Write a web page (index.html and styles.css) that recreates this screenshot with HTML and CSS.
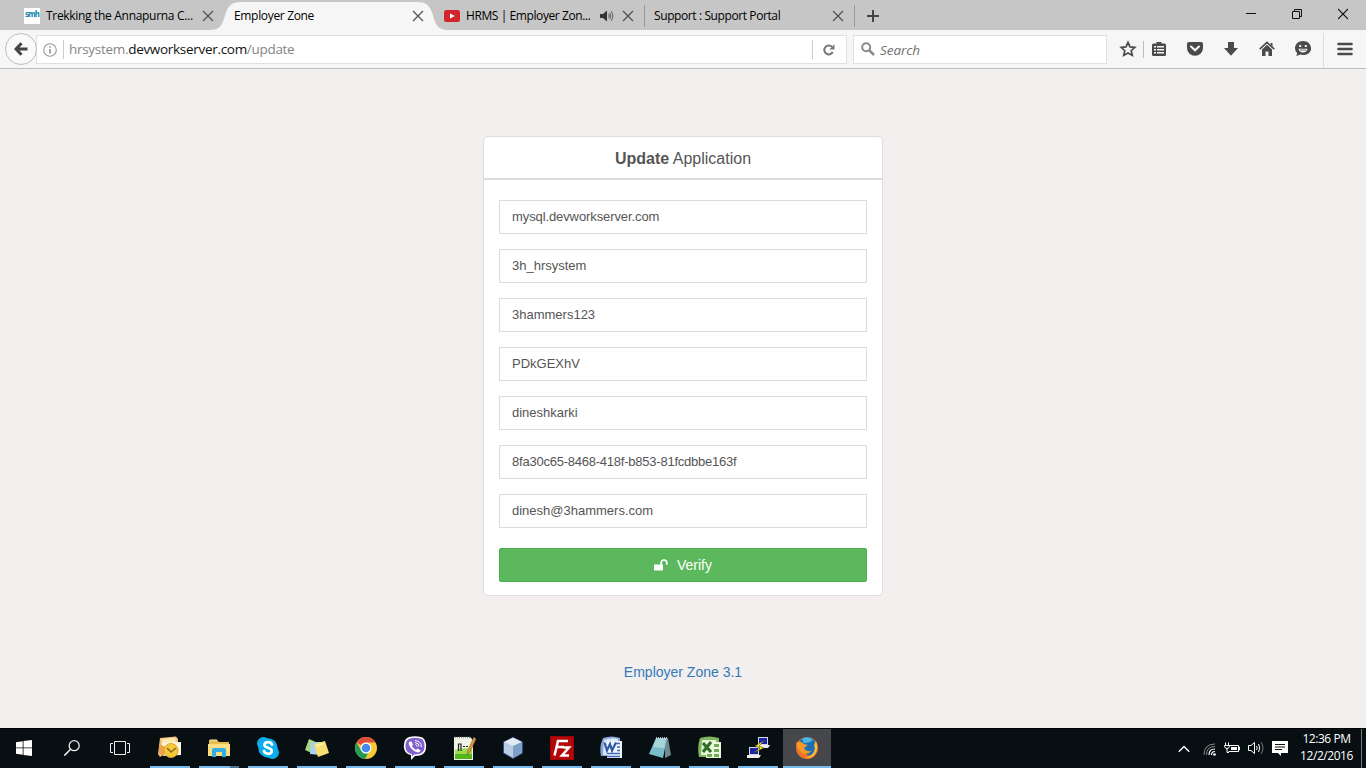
FILE: index.html
```html
<!DOCTYPE html>
<html lang="en">
<head>
<meta charset="utf-8">
<title>Employer Zone</title>
<link rel="stylesheet" href="styles.css">
</head>
<body>
<div class="screen">
  <header class="tabstrip">
    <div class="tab">
      <span class="favicon-smh">smh</span>
      <span class="tab-title t1">Trekking the Annapurna C...</span>
      <svg class="close" viewBox="0 0 12 12"><path d="M1 1L11 11M11 1L1 11"/></svg>
    </div>
    <div class="tab active">
      <svg class="tab-shape" viewBox="0 0 238 28"><path d="M0 28C9 28 12 24 14.500 15C17.500 4 21 0 31 0H207C217 0 220.500 4 223.500 15C226 24 229 28 238 28Z" fill="#f6f6f6"/></svg>
      <span class="tab-title t2">Employer Zone</span>
      <svg class="close" viewBox="0 0 12 12"><path d="M1 1L11 11M11 1L1 11"/></svg>
    </div>
    <div class="tab">
      <svg class="yt" viewBox="0 0 16 12"><rect width="16" height="12" rx="2.500" fill="#d3232b"/><path d="M6 3.500V8.500L11 6Z" fill="#fff"/></svg>
      <span class="tab-title t3">HRMS | Employer Zon...</span>
      <svg class="sound" viewBox="0 0 14 12"><path d="M0 4H3L7 .5V11.500L3 8H0Z" fill="#333"/><path d="M8.500 4Q10 6 8.500 8M9.800 2.500Q12 6 9.800 9.500M11.200 1.200Q14.500 6 11.200 10.800" fill="none" stroke="#555" stroke-width=".9"/></svg>
      <svg class="close" viewBox="0 0 12 12"><path d="M1 1L11 11M11 1L1 11"/></svg>
    </div>
    <div class="tab ruled">
      <span class="tab-title t4">Support : Support Portal</span>
      <svg class="close" viewBox="0 0 12 12"><path d="M1 1L11 11M11 1L1 11"/></svg>
    </div>
    <div class="newtab"><svg width="12" height="12" viewBox="0 0 12 12"><path d="M6 0V12M0 6H12" stroke="#444" stroke-width="2"/></svg></div>
    <div class="winbtns">
      <svg width="10" height="12" viewBox="0 0 10 12"><path d="M0 5.500H10" stroke="#111"/></svg>
      <svg width="10" height="12" viewBox="0 0 10 12"><path d="M.5 3.500H7.500V10.500H.5ZM2.500 3.500V1.500H9.500V8.500H7.500" fill="none" stroke="#111"/></svg>
      <svg width="10" height="12" viewBox="0 0 10 12"><path d="M0 1L10 11M10 1L0 11" stroke="#111" stroke-width="1.100"/></svg>
    </div>
  </header>
  <nav class="toolbar">
    <div class="back"><svg width="14" height="14" viewBox="0 0 14 14"><path d="M7.500 1.200L2 7L7.500 12.800M2.500 7H13.500" fill="none" stroke="#444" stroke-width="3"/></svg></div>
    <div class="urlbox">
      <svg class="info" width="14" height="14" viewBox="0 0 14 14"><circle cx="7" cy="7" r="6.300" fill="none" stroke="#969696" stroke-width="1.100"/><path d="M7 6V10.500M7 3.200V4.800" stroke="#888" stroke-width="1.500"/></svg>
      <span class="url">hrsystem.<b>devworkserver.com</b>/update</span>
      <span class="reload"><svg width="12" height="12" viewBox="0 0 12 12"><path d="M9.800 8A4.500 4.500 0 1 1 9 2.700" fill="none" stroke="#777" stroke-width="2"/><path d="M11.500 .3V5.500H6.300Z" fill="#777"/></svg></span>
    </div>
    <div class="searchbox">
      <svg width="14" height="14" viewBox="0 0 14 14"><circle cx="5.200" cy="5.200" r="4" fill="none" stroke="#8a8a8a" stroke-width="2"/><path d="M8 8L13 13" stroke="#8a8a8a" stroke-width="2.500"/></svg>
      <span class="placeholder">Search</span>
    </div>
    <div class="tools">
      <svg width="18" height="18" viewBox="0 0 18 18"><path d="M9 2.300L11 6.900L15.800 7.400L12.200 10.700L13.300 15.400L9 13L4.700 15.400L5.800 10.700L2.200 7.400L7 6.900Z" fill="none" stroke="#4a4a4a" stroke-width="1.700"/></svg>
      <i class="minirule"></i>
      <svg width="18" height="18" viewBox="0 0 18 18"><path d="M3.500 3.500H6.500V2H11.500V3.500H14.500Q16 3.500 16 5V14.500Q16 16 14.500 16H3.500Q2 16 2 14.500V5Q2 3.500 3.500 3.500Z" fill="#4a4a4a"/><path d="M4 6H6V7.500H4ZM7 6H14V7.500H7ZM4 9H6V10.500H4ZM7 9H14V10.500H7ZM4 12H6V13.500H4ZM7 12H14V13.500H7Z" fill="#f6f6f6"/></svg>
      <svg width="18" height="18" viewBox="0 0 18 18"><path d="M3 2H15Q17 2 17 4V8A8 7.700 0 0 1 1 8V4Q1 2 3 2Z" fill="#4a4a4a"/><path d="M5 6.500L9 10.300L13 6.500" stroke="#f6f6f6" stroke-width="2" fill="none" stroke-linecap="round"/></svg>
      <svg width="18" height="18" viewBox="0 0 18 18"><path d="M6 2H12V8H16L9 15.800L2 8H6Z" fill="#4a4a4a"/></svg>
      <svg width="18" height="18" viewBox="0 0 18 18"><path d="M1.700 9.200L9 2.300L16.300 9.200" fill="none" stroke="#4a4a4a" stroke-width="1.600"/><path d="M4 9.500L9 4.800L14 9.500V16H10.500V11.500H7.500V16H4ZM12.500 3H14.500V6.500L12.500 4.500Z" fill="#4a4a4a"/></svg>
      <svg width="18" height="18" viewBox="0 0 18 18"><path d="M9 1C13.700 1 17 4.200 17 8.200S13.700 15 9 15Q7.500 15 6.200 14.600Q4.500 15.800 2 15.700Q3.200 14.500 3.100 13Q1 11.200 1 8.200C1 4.200 4.300 1 9 1Z" fill="#4a4a4a"/><path d="M6.200 5V7M11.800 5V7" stroke="#f6f6f6" stroke-width="2"/><path d="M4.500 8.800H13.500Q12.800 12.500 9 12.500T4.500 8.800Z" fill="#f6f6f6"/><path d="M6 10H12" stroke="#777"/></svg>
    </div>
    <div class="menu"><svg width="16" height="14" viewBox="0 0 16 14"><path d="M1.500 2H14.500M1.500 7H14.500M1.500 12H14.500" stroke="#4a4a4a" stroke-width="2.600" stroke-linecap="round"/></svg></div>
  </nav>
  <main class="page">
    <section class="panel">
      <h1 class="panel-title"><b>Update</b> Application</h1>
      <form class="form">
        <div class="field host">mysql.devworkserver.com</div>
        <div class="field">3h_hrsystem</div>
        <div class="field">3hammers123</div>
        <div class="field">PDkGEXhV</div>
        <div class="field">dineshkarki</div>
        <div class="field key">8fa30c65-8468-418f-b853-81fcdbbe163f</div>
        <div class="field">dinesh@3hammers.com</div>
        <button class="verify" type="button"><svg width="14" height="12" viewBox="0 0 14 12"><path d="M0 5.500H9V11Q9 11.500 8.500 11.500H.5Q0 11.500 0 11Z" fill="#fff"/><path d="M7.200 6V3.800A2.800 2.800 0 0 1 12.800 3.800V5.800" fill="none" stroke="#fff" stroke-width="1.700"/></svg><span>Verify</span></button>
      </form>
    </section>
    <a class="version">Employer Zone 3.1</a>
  </main>
  <footer class="taskbar">
    <div class="sys"><svg width="16" height="16" viewBox="0 0 16 16"><path d="M0 2.200L6.700 1.200V7.500H0ZM7.500 1.100L16 0V7.500H7.500ZM0 8.300H6.700V14.800L0 13.800ZM7.500 8.300H16V16L7.500 14.900Z" fill="#fff"/></svg></div>
    <div class="sys"><svg width="16" height="16" viewBox="0 0 16 16"><circle cx="10.200" cy="5.700" r="5" fill="none" stroke="#eee" stroke-width="1.300"/><path d="M6.600 9.300L.3 15.600" stroke="#eee" stroke-width="1.500"/></svg></div>
    <div class="sys"><svg width="20" height="16" viewBox="0 0 20 16"><path d="M4.500 1.500H15.500V14.500H4.500ZM3 3.500H.5V12.500H3M17 3.500H19.500V12.500H17" fill="none" stroke="#eee"/></svg></div>
    <div class="apps">
      <div class="app"><svg viewBox="0 0 24 24"><path d="M2 2L18 .5L20 3V9L2 21L0 18Z" fill="#f3c583"/><path d="M4 3L17 2L18 8H4Z" fill="#fde8b1"/><path d="M4 7L23 6V19L5 20Z" fill="#fff7e4"/><path d="M1 8L8 11L6 20L1 18Z" fill="#efa44a"/><circle cx="13" cy="14.500" r="7" fill="#f7c83a" stroke="#dda326"/><path d="M9 12L13 16L18 12" fill="none" stroke="#8b6820" stroke-width="1.500"/></svg></div>
      <div class="app stacked"><svg viewBox="0 0 24 24"><path d="M2 4H10L12 6H22V20H2Z" fill="#e9bc52"/><path d="M1 8H23V20H1Z" fill="#fbdd83"/><path d="M5 21V14Q5 12 7 12H17Q19 12 19 14V21H15V16H9V21Z" fill="#31aee3"/><path d="M3 4H10" stroke="#fff0b8"/></svg></div>
      <div class="app"><svg viewBox="0 0 24 24"><circle cx="7.500" cy="7.500" r="6.500" fill="#0baeea"/><circle cx="16.500" cy="16.500" r="6.500" fill="#0baeea"/><circle cx="12" cy="12" r="9.700" fill="#0baeea"/><path d="M16 8.500C14.500 5.200 8.500 5.500 8.500 9C8.500 12.500 15.800 11 15.800 15C15.800 18.800 9 18.600 8 15" fill="none" stroke="#fff" stroke-width="2.800" stroke-linecap="round"/></svg></div>
      <div class="app"><svg viewBox="0 0 24 24"><path d="M4 3L13 7L9 18L0 14Z" fill="#a8d97d"/><path d="M6 6L16 6L15 19L5 18Z" fill="#a6d2ee"/><path d="M9 8L20 5L24 17L13 21Z" fill="#f8df70"/><path d="M11 10L19 7.500" stroke="#fff0a4" stroke-width="2"/></svg></div>
      <div class="app"><svg viewBox="0 0 24 24"><circle cx="12" cy="12" r="11" fill="#f7c932"/><path d="M2.500 6.500A11 11 0 0 1 21.500 6.500H12A5.500 5.500 0 0 0 7 9.500L12 12Z" fill="#df4d40"/><path d="M2.500 6.500L7.300 14.600A5.500 5.500 0 0 0 14 17L11.200 23A11 11 0 0 1 2.500 6.500Z" fill="#249b55"/><circle cx="12" cy="12" r="5.500" fill="#fff"/><circle cx="12" cy="12" r="4.300" fill="#4788ec"/></svg></div>
      <div class="app"><svg viewBox="0 0 24 24"><path d="M6 1Q12-.5 18 1Q22 2 23 8Q24 18 17 19.500L12 20L8 24V19Q2 18 1 12Q0 3 6 1Z" fill="#fff"/><path d="M7 2.500Q12 1 17 2.500Q21 3 21.500 9Q22 17 16 18L11 18.500L9 20.500V18Q3 17 2.500 11Q2 4 7 2.500Z" fill="#8061cf"/><path d="M7 5.500Q5 6.500 6 9Q9 15 15 16.500Q17 16.500 17.500 14.500L14.500 12.500L13 14Q10 12 9 10L10 8.500L8.500 5.500Z" fill="#fff"/><path d="M12 4.500Q18 5 18.500 11M12 6.500Q16 7 16 10.500M12.500 8.500Q14 9 14 10.500" fill="none" stroke="#fff"/></svg></div>
      <div class="app"><svg viewBox="0 0 24 24"><path d="M2 1H18L21 4V24H2Z" fill="#f1f3e4"/><path d="M3 14Q11 11 20 13V22H3Z" fill="#9bdc51"/><path d="M3 18H20V23H3Z" fill="#54b51d"/><path d="M3 1.500H18" stroke="#999" stroke-width="1.500" stroke-dasharray="1 1"/><path d="M6.500 15V8H9V15M11 10.500H13M14 10.500H16" stroke="#222" fill="none" stroke-width="1.200"/><path d="M22 1L24 3L18 16L15 19L15.500 15Z" fill="#d79a36" stroke="#765124" stroke-width=".5"/></svg></div>
      <div class="app"><svg viewBox="0 0 24 24"><path d="M12 1.500L21.500 6V17L12 22.500L2.500 17V6Z" fill="#b9cee5" stroke="#334d88"/><path d="M12 1.500L21 6L12 10L3 6Z" fill="#e2ebf2"/><path d="M12 10L21 6V17L12 22Z" fill="#7f9fc7"/></svg></div>
      <div class="app"><svg viewBox="0 0 24 24"><path d="M0 0H24V24H0Z" fill="#b40708"/><path d="M.5 .5H23.500V23.500H.5Z" fill="none" stroke="#800" stroke-dasharray="1 1"/><path d="M4.500 19.500L8 5H18M6.500 11H14M13 11.500H19L12 19.500H19" fill="none" stroke="#fff" stroke-width="2.500"/></svg></div>
      <div class="app"><svg viewBox="0 0 24 24"><path d="M4 2Q13-1 21 2V20H2Q0 10 4 2Z" fill="#87a5d6"/><path d="M5 4Q13 1 19 3V19H4Z" fill="#dce8f9"/><path d="M8 5H23V22H8Z" fill="#eff5ff"/><path d="M17 7.500H21M18 11H21M18 14.500H21M8 17.500H21M8 20.500H21" stroke="#4168ad" stroke-width="1.500"/><path d="M5.500 6.500L8 14.500L11 8L13 14.500L17 6.500" fill="none" stroke="#3258a2" stroke-width="2.200"/></svg></div>
      <div class="app"><svg viewBox="0 0 24 24"><path d="M17 2L20 2L23 19L17 22Z" fill="#70888b"/><path d="M8 2L19 2L15 22L1 18Z" fill="#79bdcb"/><path d="M8 3L18 3L16 12L5 11Z" fill="#a9d4da"/><path d="M8 2H20" stroke="#e4e7e4" stroke-width="1.500" stroke-dasharray="1 1"/></svg></div>
      <div class="app"><svg viewBox="0 0 24 24"><path d="M3 2Q12-1 22 2V21H2Q0 10 3 2Z" fill="#7eb45b"/><path d="M5 4H19V19H4Z" fill="#e4f2d6"/><path d="M10 6H24V22H9Z" fill="#eaf6df"/><path d="M6 7L14 16M14 6L6 16" stroke="#2d6d25" stroke-width="3"/><path d="M17 8H22V11H17ZM17 13H22V16H17ZM10 18H15V21H10ZM17 18H22V21H17Z" fill="#75ac51"/></svg></div>
      <div class="app"><svg viewBox="0 0 24 24"><path d="M12 1H22V10H12ZM3 11H13V20H3Z" fill="#d9d9d9"/><path d="M13 2H21V8H13ZM4 12H12V18H4Z" fill="#1723b5"/><path d="M14 9H24L22 12H14ZM1 19H15L13 22H1Z" fill="#eee"/><path d="M19 4L9 10L14 12L7 17L18 12L13 10Z" fill="#f8e927" stroke="#343411" stroke-width=".5"/></svg></div>
      <div class="app current"><svg viewBox="0 0 24 24"><circle cx="12" cy="12" r="11" fill="#ee7528"/><path d="M5 4Q12-2 19 4Q22 8 21 14Q19 20 12 19L7 11Z" fill="#1e70b6"/><path d="M7 3Q13-1 18 4Q15 7 9 7Z" fill="#4ab8e2"/><path d="M2 5Q2 7 5 6Q8 6 9 8L13 9L9 12Q11 16 17 15Q10 21 5 15Q0 10 2 5Z" fill="#f49a28"/><path d="M21 5Q24 12 20 18Q17 23 10 22Q19 20 20 12Q18 9 21 5Z" fill="#f7c13c"/></svg></div>
    </div>
    <div class="tray">
      <svg class="chev" width="12" height="8" viewBox="0 0 12 8"><path d="M.8 6.800L6 1.500L11.200 6.800" fill="none" stroke="#fff" stroke-width="1.300"/></svg>
      <svg class="wifi" width="13" height="13" viewBox="0 0 13 13"><path d="M1 12Q1 1 12 1M3.500 12Q3.500 3.500 12 3.500" fill="none" stroke="#888"/><path d="M6 12Q6 6 12 6M8.500 12Q8.500 8.500 12 8.500" fill="none" stroke="#fff" stroke-width="1.200"/><circle cx="11.500" cy="11.500" r="1.300" fill="#fff"/></svg>
      <svg class="power" width="16" height="12" viewBox="0 0 16 12"><path d="M5.500 3.500H14.500V9.500H4.500M14.500 5H15.500V8H14.500M1.500 .5V3M4.500 .5V3M.5 3.500H5.500V4.500Q5 6.500 3 6.500T.5 4.500ZM3 6.500V10.500H5" fill="none" stroke="#fff"/><path d="M7 5H13V8H7Z" fill="#fff"/></svg>
      <svg class="volume" width="16" height="14" viewBox="0 0 16 14"><path d="M.5 4.500H3L6.500 1.500V12.500L3 9.500H.5ZM8.500 5Q10 7 8.500 9M10.500 3Q13 7 10.500 11" fill="none" stroke="#fff"/><path d="M13 1Q17 7 13 13" fill="none" stroke="#777"/></svg>
      <svg class="notify" width="16" height="15" viewBox="0 0 16 15"><path d="M0 0H16V12H9V15L6 12H0Z" fill="#fff"/><path d="M3 3.500H13M3 6H13M3 8.500H10" stroke="#111"/></svg>
      <div class="clock"><span>12:36 PM</span><span class="date">12/2/2016</span></div>
    </div>
  </footer>
</div>
</body>
</html>
```
FILE: styles.css
```css
* { box-sizing: border-box; }
body { margin: 0; font-family: "Open Sans", "Noto Sans", sans-serif; overflow: hidden; }
svg { display: block; flex: none; }
.screen { width: 1366px; height: 768px; display: flex; flex-direction: column; background: #f2efee; }

.tabstrip { height: 30px; flex: none; display: flex; background: #c6c6c6; padding-left: 14px; }
.tab { position: relative; width: 210px; padding: 2px 10px 0; display: flex; align-items: center; color: #111; }
.tab-shape { position: absolute; left: -14px; top: 2px; width: 238px; height: 28px; }
.tab-title { position: relative; font-size: 12px; line-height: 28px; white-space: nowrap; color: #000; }
.t1 { letter-spacing: -.31px; }
.t2 { letter-spacing: -.33px; }
.t3 { letter-spacing: -.41px; }
.t4 { letter-spacing: -.4px; }
.close { position: relative; width: 12px; height: 12px; margin-left: auto; }
.close path { stroke: #505050; stroke-width: 1.2; }
.favicon-smh { width: 16px; height: 16px; margin-right: 6px; background: #fff; color: #1688b5; font-size: 9px; line-height: 14px; letter-spacing: -1px; font-weight: 600; text-align: center; font-stretch: condensed; font-family: "DejaVu Sans Condensed", "Open Sans", sans-serif; font-size: 8px; }
.yt { width: 16px; height: 12px; margin-right: 6px; }
.sound { width: 14px; height: 12px; margin-left: auto; }
.sound + .close { margin-left: 8px; }
.ruled { background: linear-gradient(#989898, #989898) 0 5px / 1px 22px no-repeat; }
.newtab { background: linear-gradient(#989898, #989898) 0 5px / 1px 22px no-repeat; padding: 10px 13px; }
.winbtns { margin-left: auto; display: flex; gap: 36px; padding: 8px 18px 0 0; }

.toolbar { height: 39px; flex: none; display: flex; background: #f6f6f6; border-bottom: 1px solid #bcbcbc; padding: 3px 0 0 5px; }
.back { position: relative; z-index: 1; width: 32px; height: 32px; border: 1px solid #bdbdbd; border-radius: 50%; background: #fafafa; display: flex; align-items: center; justify-content: center; }
.urlbox { width: 811px; height: 29px; margin: 2px 0 0 -1px; border: 1px solid #e0e0e0; background: #fff; display: flex; align-items: center; padding-left: 6px; }
.url { margin-left: 6px; padding-left: 5px; border-left: 1px solid #ccc; height: 19px; line-height: 19px; font-size: 13.5px; letter-spacing: -.3px; color: #858585; white-space: nowrap; }
.url b { font-weight: 400; color: #111; }
.reload { margin-left: auto; width: 34px; height: 19px; border-left: 1px solid #ccc; display: flex; align-items: center; justify-content: center; }
.reload svg { margin-right: 2px; }
.searchbox { width: 254px; height: 29px; margin: 2px 0 0 6px; border: 1px solid #e0e0e0; background: #fff; display: flex; align-items: center; padding-left: 7px; }
.searchbox svg { margin-top: -2px; }
.placeholder { margin-left: 5px; font-style: italic; font-size: 13.5px; letter-spacing: -.05px; line-height: 20px; color: #707070; }
.tools { display: flex; align-items: center; gap: 18px; padding: 0 0 3px 12px; height: 35px; }
.minirule { width: 1px; height: 17px; background: #bbb; margin: 0 -12px; }
.menu { margin-left: 11px; height: 35px; width: 43px; border-left: 1px solid #ddd; padding: 9px 0 0 13px; }

.page { flex: 1; display: flex; flex-direction: column; align-items: center; padding-top: 67px; font-family: "Liberation Sans", Arial, sans-serif; color: #555; }
.panel { width: 400px; height: 460px; border: 1px solid #dcdddf; border-radius: 5px; background: #fff; }
.panel-title { height: 43px; margin: 0; border-bottom: 2px solid #dcdddf; font-size: 16px; line-height: 43px; font-weight: 400; text-align: center; }
.form { padding: 20px 15px 0; display: flex; flex-direction: column; gap: 15px; }
.field { height: 34px; border: 1px solid #dcdcdc; padding: 0 12px; font-size: 13px; line-height: 32px; }
.host { letter-spacing: -.1px; }
.key { letter-spacing: -.23px; }
.verify { height: 34px; margin-top: 5px; padding: 0; border: 1px solid #4cae4c; border-radius: 2px; background: #5cb85c; color: #fff; font: 14px "Liberation Sans", Arial, sans-serif; display: flex; align-items: center; justify-content: center; gap: 9px; }
.version { margin-top: 67px; color: #337ab7; font-size: 14px; line-height: 18px; }

.taskbar { height: 40px; flex: none; display: flex; background: #080f13; border-top: 1px solid #000; }
.sys { width: 48px; padding-bottom: 1px; display: flex; align-items: center; justify-content: center; }
.apps { display: flex; gap: 1px; margin-left: 2px; }
.app { width: 48px; padding-bottom: 1px; display: flex; align-items: center; justify-content: center; background: linear-gradient(#76b9ed, #76b9ed) 4px 100% / 40px 2px no-repeat; }
.app svg { width: 24px; height: 24px; }
.stacked { background: linear-gradient(90deg, #76b9ed 31px, #4d7390 31px) 4px 100% / 40px 2px no-repeat; }
.current { background: #45474a; border-bottom: 2px solid #76b9ed; padding: 1px 0 0; }
.tray { margin-left: auto; display: flex; align-items: center; color: #fff; }
.chev { margin-right: 13px; }
.wifi { margin-right: 8px; margin-top: 2px; }
.power { margin-right: 8px; margin-top: -1px; }
.volume { margin-right: 8px; margin-top: -1px; }
.notify { margin-right: 12px; }
.clock { width: 62px; height: 39px; margin-right: 4px; border-right: 1px solid #777; padding: 1px 8px 0 0; font-size: 12px; line-height: 17px; letter-spacing: -.45px; display: flex; flex-direction: column; align-items: center; white-space: nowrap; }
.date { letter-spacing: -.45px; }
```
